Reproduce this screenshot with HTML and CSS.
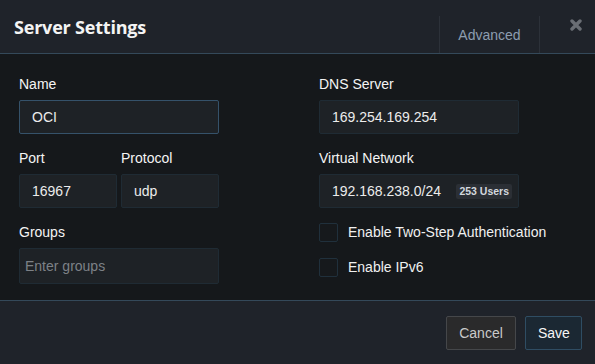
FILE: index.html
```html
<!DOCTYPE html>
<html lang="en">

<head>
    <meta charset="UTF-8">
    <meta name="viewport" content="width=device-width, initial-scale=1.0">
    <title>Server Settings</title>
    <link rel="stylesheet" href="styles.css">
</head>

<body>
    <div class="modal">
        <div class="modal-header">
            <h1 class="modal-title">Server Settings</h1>
            <div class="tab">Advanced</div>
            <button class="close" aria-label="Close">
                <svg width="12" height="12" viewBox="0 0 12 12">
                    <path d="M2 2 L10 10 M10 2 L2 10" stroke="#6a6e74" stroke-width="3.4" stroke-linecap="round" />
                </svg>
            </button>
        </div>

        <div class="modal-body">
            <div class="col">
                <div class="group">
                    <label>Name</label>
                    <input type="text" class="text-input focused" value="OCI">
                </div>
                <div class="pair">
                    <div class="group">
                        <label>Port</label>
                        <input type="text" class="text-input" value="16967">
                    </div>
                    <div class="group">
                        <label>Protocol</label>
                        <input type="text" class="text-input" value="udp">
                    </div>
                </div>
                <div class="group">
                    <label>Groups</label>
                    <input type="text" class="text-input tags" placeholder="Enter groups">
                </div>
            </div>

            <div class="col">
                <div class="group">
                    <label>DNS Server</label>
                    <input type="text" class="text-input" value="169.254.169.254">
                </div>
                <div class="group">
                    <label>Virtual Network</label>
                    <div class="text-input with-badge">
                        <input type="text" value="192.168.238.0/24">
                        <span class="badge">253 Users</span>
                    </div>
                </div>
                <div class="checks">
                    <label class="check"><span class="box"></span>Enable Two-Step Authentication</label>
                    <label class="check"><span class="box"></span>Enable IPv6</label>
                </div>
            </div>
        </div>

        <div class="modal-footer">
            <button class="btn cancel">Cancel</button>
            <button class="btn save">Save</button>
        </div>
    </div>
</body>

</html>
```

FILE: styles.css
```css
body {
    margin: 0;
    background-color: #15181b;
    font-family: "Liberation Sans", Arial, sans-serif;
    color: #f2f2f2;
}

.modal {
    width: 595px;
    height: 364px;
    display: flex;
    flex-direction: column;
    overflow: hidden;
}

/* header */
.modal-header {
    height: 53px;
    display: flex;
    background-color: #1f232a;
    border-bottom: 1px solid #34495a;
}

.modal-title {
    flex: 1;
    margin: 0;
    padding-left: 14px;
    display: flex;
    align-items: center;
    font-family: "Open Sans", sans-serif;
    font-size: 18px;
    font-weight: 700;
    color: #f4f4f4;
    letter-spacing: -0.2px;
}

.tab {
    margin-top: 16px;
    width: 99px;
    display: flex;
    align-items: center;
    justify-content: center;
    border-left: 1px solid #2c3139;
    border-right: 1px solid #2c3139;
    font-size: 14px;
    color: #8d9db0;
}

.close {
    align-self: flex-start;
    margin: 19px 13px 0 30px;
    padding: 0;
    width: 12px;
    height: 12px;
    border: none;
    background: none;
    display: flex;
}

/* body */
.modal-body {
    flex: 1;
    display: grid;
    grid-template-columns: 200px 200px;
    column-gap: 100px;
    padding: 22px 19px 0;
}

.col {
    display: flex;
    flex-direction: column;
    gap: 16px;
}

.group {
    display: flex;
    flex-direction: column;
    gap: 8px;
}

.group label {
    font-size: 14px;
    line-height: 16px;
    color: #f4f4f4;
}

.pair {
    display: grid;
    grid-template-columns: 98px 98px;
    column-gap: 4px;
}

.text-input {
    box-sizing: border-box;
    width: 100%;
    height: 34px;
    padding: 0 12px;
    border: 1px solid #1f2b34;
    border-radius: 2px;
    background-color: #1e2226;
    color: #ececec;
    font-family: "Liberation Sans", Arial, sans-serif;
    font-size: 14px;
    outline: none;
}

.text-input.focused {
    border-color: #35526a;
}

.text-input.tags {
    height: 36px;
    padding: 0 5px;
}

.text-input::placeholder {
    color: #7d8186;
}

.with-badge {
    display: flex;
    align-items: center;
    justify-content: space-between;
    padding-right: 6px;
}

.with-badge input {
    width: 120px;
    padding: 0;
    border: none;
    background: none;
    color: #ececec;
    font-family: "Liberation Sans", Arial, sans-serif;
    font-size: 14px;
    outline: none;
}

.badge {
    padding: 0 3px;
    height: 15px;
    line-height: 15px;
    border-radius: 2px;
    background-color: #2b2f35;
    color: #d3d8de;
    font-size: 10.5px;
    font-weight: 700;
}

.checks {
    display: flex;
    flex-direction: column;
    gap: 16px;
    margin-top: -1px;
}

.check {
    display: flex;
    align-items: center;
    gap: 10px;
    font-size: 14px;
    line-height: 19px;
    color: #f0f0f0;
    white-space: nowrap;
}

.box {
    box-sizing: border-box;
    flex: none;
    width: 19px;
    height: 19px;
    border: 1px solid #20303c;
    border-radius: 2px;
    background-color: #16191c;
}

/* footer */
.modal-footer {
    height: 64px;
    display: flex;
    align-items: flex-start;
    justify-content: flex-end;
    gap: 9px;
    padding: 15px 13px 0 0;
    box-sizing: border-box;
    background-color: #1f232a;
    border-top: 1px solid #34495a;
}

.btn {
    height: 34px;
    padding: 0 12px;
    border-radius: 2px;
    font-family: "Liberation Sans", Arial, sans-serif;
    font-size: 14px;
}

.cancel {
    width: 70px;
    background-color: #2a2a2b;
    border: 1px solid #45474a;
    color: #c9c9c9;
}

.save {
    width: 57px;
    background-color: #1b2833;
    border: 1px solid #2f4d63;
    color: #f6f6f6;
}
```
